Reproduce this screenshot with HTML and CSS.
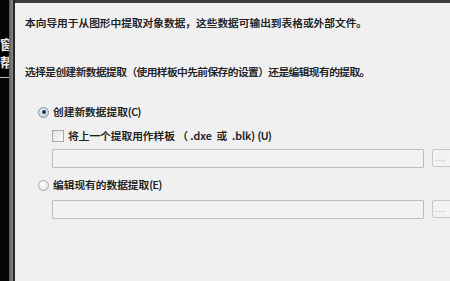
FILE: index.html
```html
<!DOCTYPE html>
<html lang="zh-CN">
<head>
<meta charset="utf-8">
<title>数据提取</title>
<link rel="stylesheet" href="styles.css">
</head>
<body>
<div class="screen">
  <div class="side">
    <div class="side-dark">
      <span class="side-char c1">窗</span>
      <span class="side-char c2">帮</span>
      <span class="side-rule"></span>
    </div>
    <div class="side-grey"></div>
    <div class="side-edge"></div>
  </div>
  <div class="dialog">
    <p class="intro">本向导用于从图形中提取对象数据，这些数据可输出到表格或外部文件。</p>
    <p class="question">选择是创建新数据提取（使用样板中先前保存的设置）还是编辑现有的提取。</p>
    <div class="options">
      <label class="radio-row first">
        <span class="radio checked"><span class="dot"></span></span>
        <span class="label">创建新数据提取<span class="key">(C)</span></span>
      </label>
      <div class="sub">
        <label class="check-row">
          <span class="checkbox"></span>
          <span class="label">将上一个提取用作样板 （ .dxe&nbsp; 或&nbsp; .blk) <span class="key">(U)</span></span>
        </label>
        <div class="field-row">
          <div class="field"></div>
          <div class="browse">...</div>
        </div>
      </div>
      <label class="radio-row second">
        <span class="radio"></span>
        <span class="label">编辑现有的数据提取<span class="key">(E)</span></span>
      </label>
      <div class="sub">
        <div class="field-row second-field">
          <div class="field"></div>
          <div class="browse">...</div>
        </div>
      </div>
    </div>
  </div>
</div>
</body>
</html>
```
FILE: styles.css
```css
html, body {
  margin: 0;
  padding: 0;
  width: 450px;
  height: 281px;
  overflow: hidden;
  background: #000;
}
.screen {
  display: flex;
  width: 450px;
  height: 281px;
}
.side {
  display: flex;
  flex: none;
}
.side-dark {
  width: 9px;
  background: #050505;
  display: flex;
  flex-direction: column;
  align-items: flex-end;
  overflow: hidden;
  padding-top: 37px;
}
.side-char {
  display: block;
  font-family: "Noto Sans CJK SC", sans-serif;
  font-size: 13px;
  line-height: 13px;
  height: 13px;
  color: #e8e8e8;
  font-weight: bold;
  white-space: nowrap;
  margin-right: -4px;
}
.side-char.c2 {
  margin-top: 5px;
}
.side-rule {
  display: block;
  width: 9px;
  height: 1px;
  background: #bbb;
  margin-top: 9px;
}
.side-grey {
  width: 4px;
  background: linear-gradient(to right, #5a5a5a, #8a8a8a);
}
.side-edge {
  width: 2px;
  background: #262626;
}
.dialog {
  flex: 1;
  background: #f0f0f0;
  border-top: 3px solid #3c3c3c;
  padding-left: 10px;
  font-family: "Noto Sans CJK SC", "Noto Sans", sans-serif;
  font-size: 10.7px;
  font-weight: 500;
  line-height: 14px;
  color: #1f1f1f;
  white-space: nowrap;
  text-shadow: 0 0 0.4px rgba(0, 0, 0, 0.5);
}
p {
  margin: 0;
}
.intro {
  margin-top: 13px;
}
.question {
  margin-top: 35px;
  letter-spacing: -0.55px;
}
.options {
  margin-left: 13px;
  margin-top: 26px;
}
.radio-row, .check-row {
  display: flex;
  align-items: center;
  height: 14px;
}
.radio {
  width: 9px;
  height: 9px;
  border-radius: 50%;
  border: 1px solid #a9a9a9;
  background: radial-gradient(circle at 40% 35%, #ffffff, #dcdcdc);
  margin-right: 4px;
  display: flex;
  align-items: center;
  justify-content: center;
  flex: none;
}
.radio.checked {
  border-color: #7f93a6;
  background: radial-gradient(circle at 40% 35%, #eef4fa, #b8c8d8);
}
.dot {
  width: 4px;
  height: 4px;
  border-radius: 50%;
  background: #243447;
}
.sub {
  margin-left: 14px;
}
.check-row {
  margin-top: 10px;
}
.checkbox {
  width: 10px;
  height: 10px;
  border: 1px solid #a8a8a8;
  background: linear-gradient(135deg, #e4e4e4, #fbfbfb);
  margin-right: 4px;
  flex: none;
}
.key {
  letter-spacing: -0.5px;
}
.field-row {
  display: flex;
  align-items: flex-start;
  margin-top: 6px;
}
.field-row.second-field {
  margin-top: 8px;
}
.field {
  width: 370px;
  height: 17px;
  border: 1px solid #bcbcbc;
  border-radius: 1px;
  background: #f2f2f2;
  flex: none;
}
.browse {
  margin-left: 8px;
  width: 26px;
  height: 16px;
  border: 1px solid #c8c8c8;
  border-radius: 2px;
  background: #f3f3f3;
  color: #b0b0b0;
  font-size: 9px;
  font-weight: normal;
  line-height: 16px;
  padding-left: 2px;
  letter-spacing: 1px;
  flex: none;
  text-shadow: none;
}
.radio-row.second {
  margin-top: 10px;
}
```
